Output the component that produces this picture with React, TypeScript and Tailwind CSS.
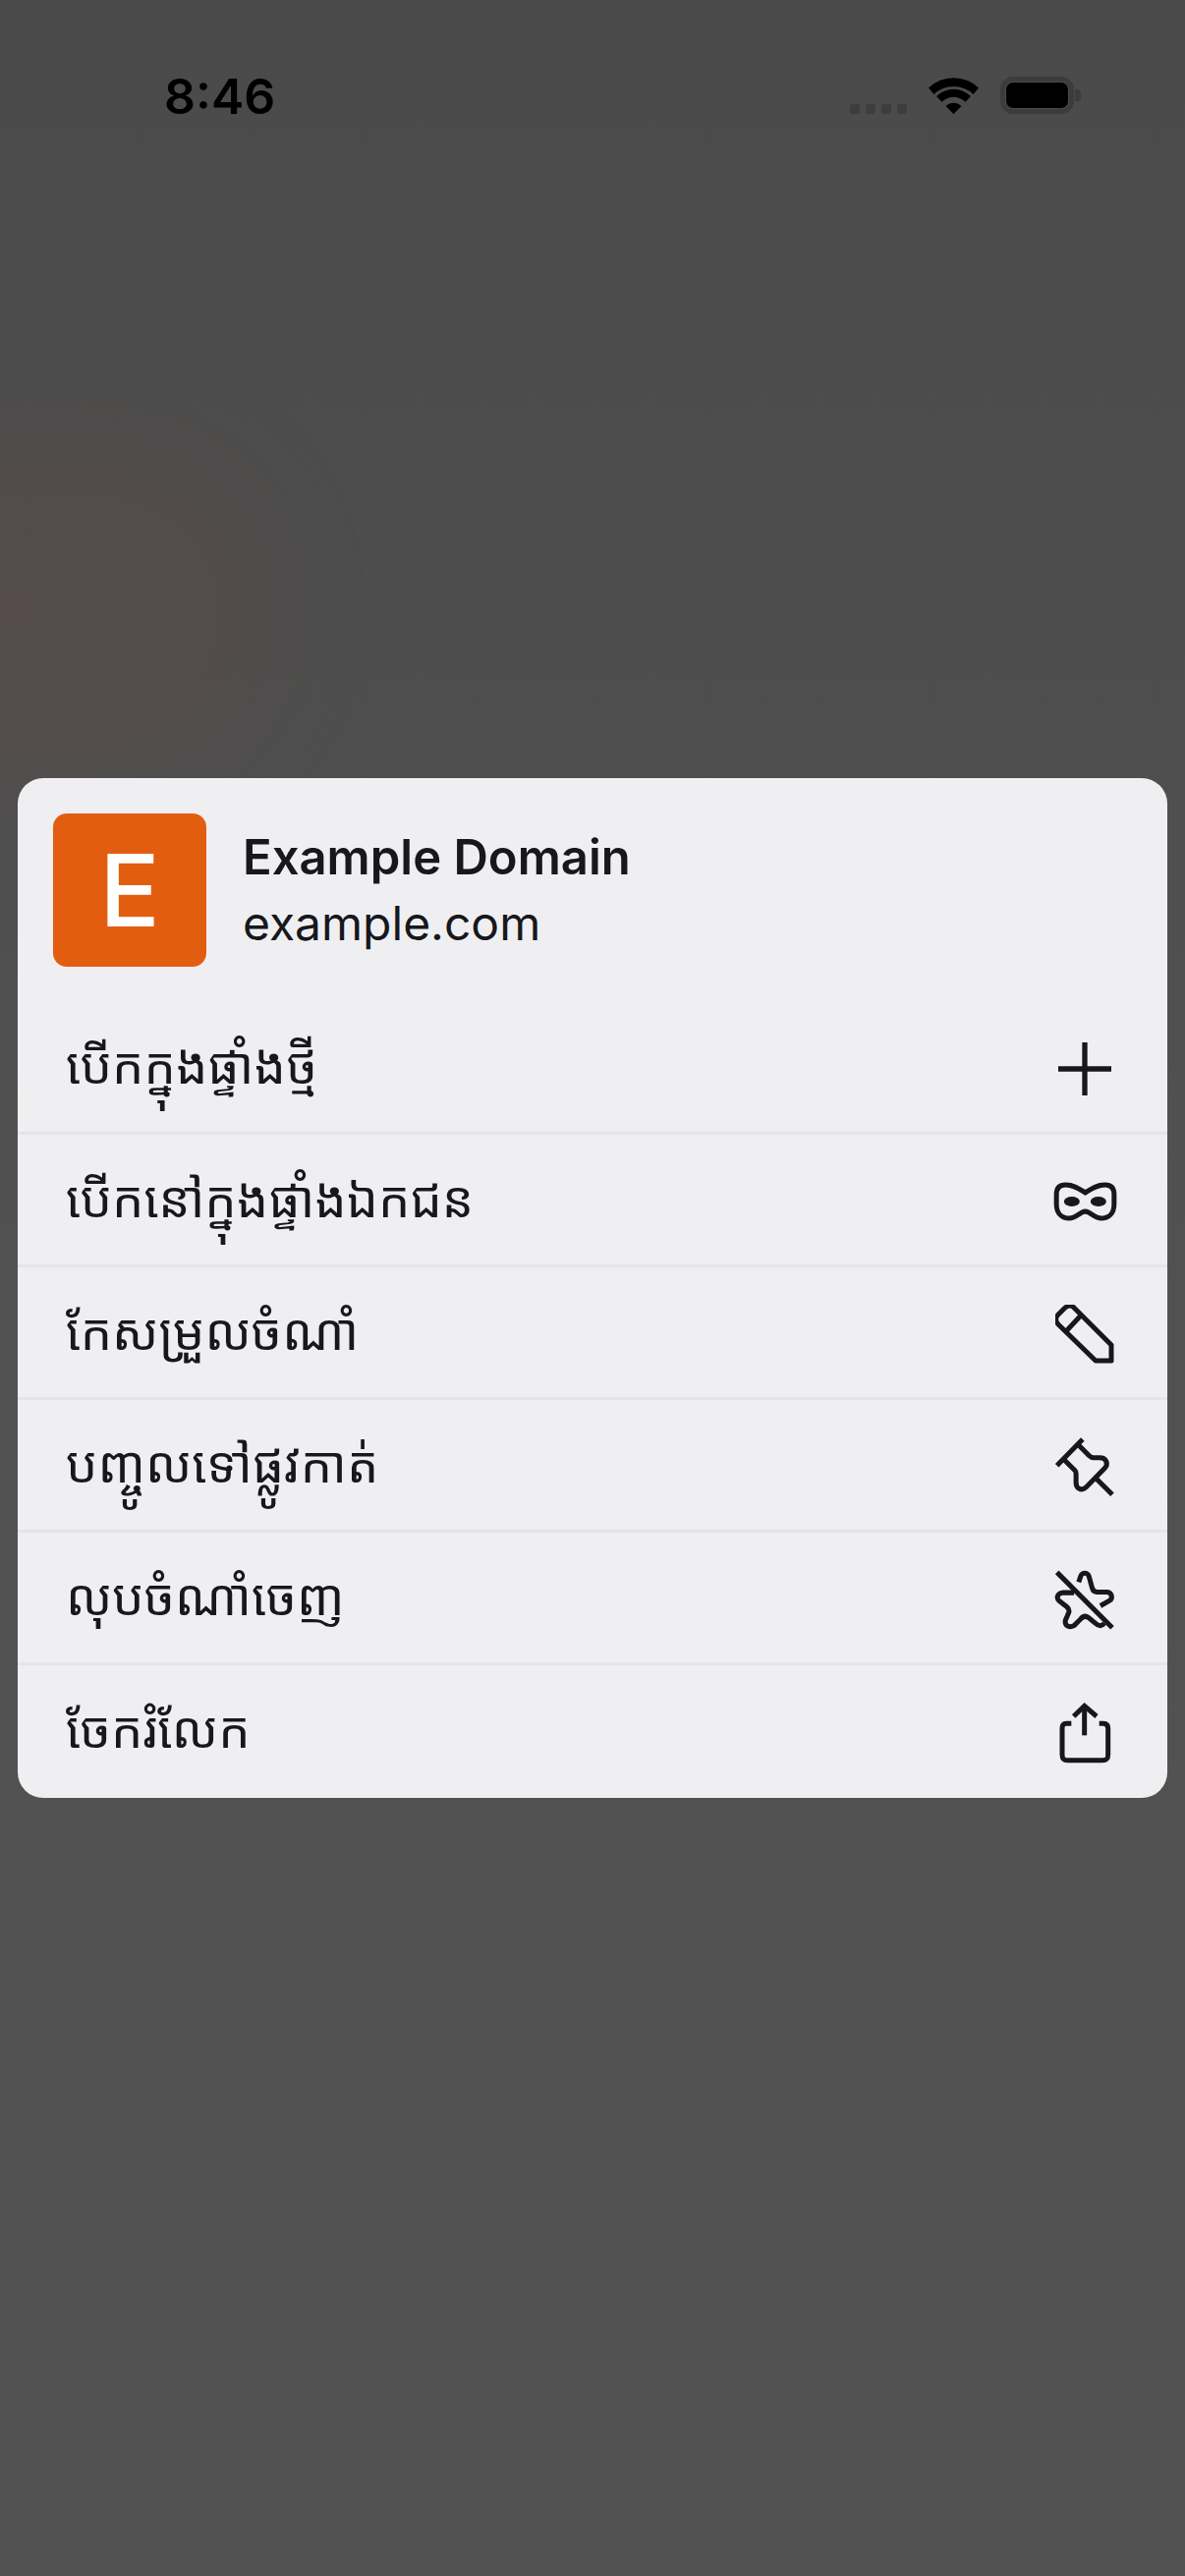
const KHMER = "font-['Noto_Sans_Khmer','Noto_Sans','DejaVu_Sans',sans-serif]";

const rows = [
  { label: 'បើកក្នុងផ្ទាំងថ្មី', icon: <PlusIcon /> },
  { label: 'បើកនៅក្នុងផ្ទាំងឯកជន', icon: <MaskIcon /> },
  { label: 'កែសម្រួលចំណាំ', icon: <PencilIcon /> },
  { label: 'បញ្ចូលទៅផ្លូវកាត់', icon: <PinIcon /> },
  { label: 'លុបចំណាំចេញ', icon: <StarOffIcon /> },
  { label: 'ចែករំលែក', icon: <ShareIcon /> },
];

function PlusIcon() {
  return (
    <svg width="54" height="54" viewBox="0 0 54 54" fill="none" stroke="#17171c" strokeWidth="5.300">
      <path d="M27 0v54M0 27h54" />
    </svg>
  );
}

function MaskIcon() {
  return (
    <svg width="65" height="40" viewBox="215 520 194 120" fill="none">
      <path
        d="M312 553C295 542 278 529 252 529 232 529 224 540 224 558V588C224 615 240 631 264 631 282 631 296 612 312 610 328 612 342 631 360 631 384 631 400 615 400 588V558C400 540 392 529 372 529 346 529 329 542 312 553Z"
        stroke="#17171c"
        strokeWidth="15"
      />
      <ellipse cx="271" cy="580" rx="24" ry="15" fill="#17171c" />
      <ellipse cx="352" cy="580" rx="24" ry="15" fill="#17171c" />
    </svg>
  );
}

function PencilIcon() {
  return (
    <svg width="60" height="60" viewBox="14 8 60 60" fill="none" stroke="#17171c" strokeWidth="5" strokeLinejoin="round">
      <path d="M33 11 71 49V65H55L17 28C14 25 14 21 17 18L23 12C26 9 30 8 33 11Z" />
      <path d="M25 35 40 19" />
    </svg>
  );
}

function PinIcon() {
  return (
    <svg width="62" height="62" viewBox="220 95 185 185" fill="none" stroke="#17171c" strokeWidth="15">
      <path d="M228 184 306 104" />
      <path d="M252 168 282 198C285 201 286 204 286 208V235C286 254 302 262 316 250L372 193C386 178 378 160 358 160H340C335 160 330 158 326 154L294 122" />
      <path d="M342 218 396 272" />
    </svg>
  );
}

function StarOffIcon() {
  return (
    <svg width="62" height="62" viewBox="220 500 185 185" fill="none" stroke="#17171c" strokeWidth="15">
      <path d="M228 510 396 678" />
      <path d="M294 540 300 522C305 510 320 510 325 522L335 558C337 566 342 570 350 570H380C396 572 398 590 388 596L360 612" />
      <path d="M280 572H245C228 574 225 590 236 598L258 615C264 620 266 625 264 632L254 655C250 672 265 680 280 672L300 652C308 642 316 642 324 648L345 665C355 675 365 674 372 665" />
    </svg>
  );
}

function ShareIcon() {
  return (
    <svg width="55" height="65" viewBox="230 900 165 195" fill="none" stroke="#17171c" strokeWidth="15">
      <path d="M310 1006V918" />
      <path d="M277 948 310 916 347 948" />
      <path d="M270 970H255C245 970 242 975 242 985V1065C242 1078 248 1082 258 1082H365C378 1082 382 1078 382 1065V985C382 975 378 970 368 970H355" />
    </svg>
  );
}

function StatusBar() {
  return (
    <div className="flex h-[198px] items-start justify-between pl-[167px] pr-[106px] pt-[69px]">
      <div className="font-['Inter',sans-serif] text-[50px] font-semibold leading-[58px] text-black">8:46</div>
      <div className="flex items-start pt-[9px]">
        <div className="mt-[28px] flex gap-[6px]">
          <span className="h-[10px] w-[10px] rounded-[3px] bg-[#3d3d3d]" />
          <span className="h-[10px] w-[10px] rounded-[3px] bg-[#3d3d3d]" />
          <span className="h-[10px] w-[10px] rounded-[3px] bg-[#3d3d3d]" />
          <span className="h-[10px] w-[10px] rounded-[3px] bg-[#3d3d3d]" />
        </div>
        <svg className="ml-[22px] mt-[1px]" width="51" height="37" viewBox="0 0 51 37" fill="#000">
          <path d="M0 10.400A37 37 0 0 1 51 10.400L45.500 16.900A29 29 0 0 0 5.500 16.900Z" />
          <path d="M8 19A25 25 0 0 1 43 19L37.500 24.800A17 17 0 0 0 13.500 24.800Z" />
          <path d="M17.500 29.100A11 11 0 0 1 33.500 29.100L25.500 37Z" />
        </svg>
        <div className="ml-[22px] flex items-center">
          <div className="h-[38px] w-[75px] rounded-[13px] border-[5px] border-[#3c3c3c] p-[1px]">
            <div className="h-full w-full rounded-[7px] bg-black" />
          </div>
          <div className="ml-[1px] h-[12px] w-[6px] rounded-r-[4px] bg-[#3c3c3c]" />
        </div>
      </div>
    </div>
  );
}

export default function App() {
  return (
    <div className="relative h-[2622px] w-[1206px] overflow-hidden bg-gradient-to-b from-[#4a4a4a] via-[#515151] to-[#525252]">
      {/* faint reddish glow behind the sheet */}
      <div className="absolute left-[-260px] top-[470px] h-[300px] w-[520px] rounded-full bg-[#6a4a42] opacity-25 blur-[60px]" />
      <div className="relative">
        <StatusBar />
        <div className="mx-[18px] mt-[594px] overflow-hidden rounded-[26px] bg-[#efeff2] pb-[3px]">
          <div className="flex h-[225px] items-start pl-[36px] pt-[36px]">
            <div className="flex h-[156px] w-[156px] items-center justify-center rounded-[14px] bg-[#e35d10] font-['Inter',sans-serif] text-[102px] font-medium text-white">
              E
            </div>
            <div className="ml-[37px] font-['Inter',sans-serif] text-[#17171c]">
              <div className="mt-[17px] text-[49px] font-semibold leading-[56px]">Example Domain</div>
              <div className="mt-[11px] text-[48px] leading-[56px]">example.com</div>
            </div>
          </div>
          {rows.map((row, i) => (
            <div
              key={row.label}
              className={`flex h-[135px] items-center justify-between pl-[49px] ${i > 0 ? 'border-t-[3px] border-[#e5e5e9] pt-[4px]' : 'pt-[6px]'}`}
            >
              <span className={`${KHMER} mb-[8px] text-[51px] leading-none text-[#17171c]`}>{row.label}</span>
              <span className="flex w-[168px] justify-center">{row.icon}</span>
            </div>
          ))}
        </div>
      </div>
    </div>
  );
}
